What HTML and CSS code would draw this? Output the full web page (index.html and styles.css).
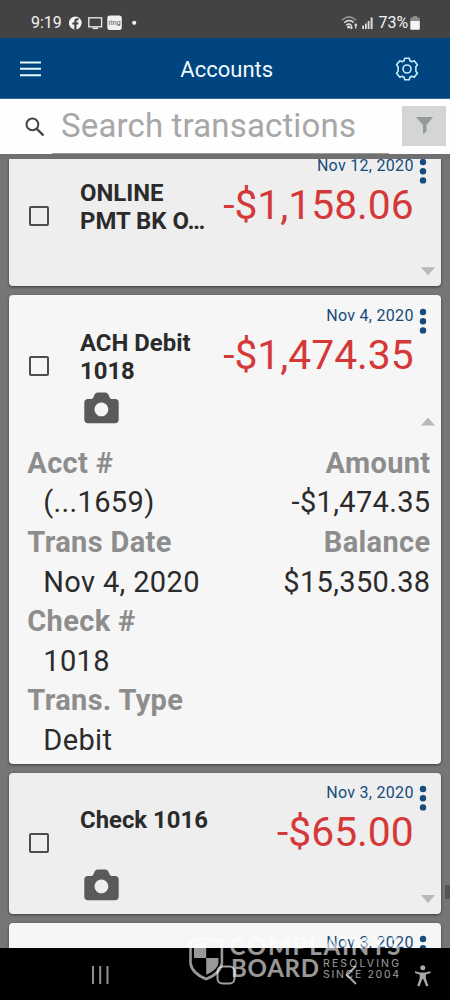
FILE: index.html
```html
<!DOCTYPE html>
<html lang="en">
<head>
<meta charset="utf-8">
<title>Accounts</title>
<link rel="stylesheet" href="styles.css">
</head>
<body>
<svg class="defs" aria-hidden="true">
  <symbol id="dots" viewBox="0 0 8 26"><circle cx="4" cy="4" r="3.2"/><circle cx="4" cy="13.2" r="3.2"/><circle cx="4" cy="22.4" r="3.2"/></symbol>
  <symbol id="camera" viewBox="0 0 35 32"><path fill-rule="evenodd" d="M4 7h3.500q1.200 0 1.800-1.400L10.800 2.200Q11.700.500 13.500.500h8q1.800 0 2.700 1.700l1.500 3.400Q26.300 7 27.500 7H31q3.700 0 3.700 3.600v17q0 3.600-3.700 3.600H4q-3.700 0-3.700-3.600v-17Q.300 7 4 7zM17.400 10.500a6.900 6.900 0 1 0 .01 0z"/></symbol>
</svg>
<div class="phone">
  <div class="status">
    <span class="clock">9:19</span>
    <svg class="notices" width="72" height="16" viewBox="0 0 72 16">
      <circle cx="6.300" cy="8" r="6.400" fill="#f2f2f2"/>
      <path d="M5.300 14.400V9.600H3.300V7.400h2V6.200q0-2.900 2.800-2.900h1.500v2H8.500q-1 0-1 1v1.100h2.100l-.4 2.200H7.500v4.800z" fill="#434343"/>
      <rect x="19.800" y="2.800" width="12.800" height="9" fill="none" stroke="#e4e4e4" stroke-width="1.400"/>
      <path d="M23.500 13.300h5.500" stroke="#e4e4e4" stroke-width="1.600"/>
      <rect x="38.300" y=".5" width="14.500" height="14.500" rx="2.800" fill="#f0f0f0"/>
      <text x="39.400" y="10" textLength="12.300" lengthAdjust="spacingAndGlyphs" class="ring">ring</text>
      <circle cx="65.200" cy="7.800" r="2.100" fill="#f4f4f4"/>
    </svg>
    <svg class="signal" width="34" height="16" viewBox="0 0 34 16">
      <g fill="none" stroke="#e2e2e2" stroke-width="1.500">
        <path d="M1 5.200Q8 -1.500 15 5.200" stroke="#999"/><path d="M3.200 7.800q4.800-4.300 9.400-.4M5.200 10.200q2.600-2.300 5 0"/>
      </g>
      <circle cx="7.600" cy="12" r="1.500" fill="#e2e2e2"/>
      <path d="M9.700 10.300h1.400v2h1.100l-1.800 2.200-1.800-2.200h1.100zM14.100 13.500h1.300v-3h1.200L14.800 8 13 10.500h1.100z" fill="#e2e2e2"/>
      <path d="M21.200 10.500h1.800V14h-1.800zM24 8.500h1.800V14H24zM26.700 6h1.800v8h-1.800zM29.600 2.500h2V14h-2z" fill="#ddd"/>
    </svg>
    <span class="percent">73%</span>
    <svg class="battery" width="10" height="15" viewBox="0 0 10 15"><path d="M3 0h4v1.500h2q.8 0 .8.800V5H.300V2.300q0-.8.800-.8H3z" fill="#8b8b8b"/><path d="M.300 5h9.500v7.700q0 1-.9 1H1.200q-.9 0-.9-1z" fill="#f5f5f5"/></svg>
  </div>

  <header class="bar">
    <svg class="menu" width="21" height="16" viewBox="0 0 21 16"><path d="M0 1.400h21M0 7.800h21M0 14.200h21" stroke="#e6fbff" stroke-width="2"/></svg>
    <h1>Accounts</h1>
    <svg class="gear" width="24" height="24" viewBox="0 0 24 24" fill="none" stroke="#c5edff" stroke-width="1.600" stroke-linejoin="round">
      <path d="M9.700 1.300h4.600l.6 2.500 1.900.9 2.400-1 3.200 4.100-1.500 2v4.400l1.500 2-3.200 4.100-2.400-1-1.900.9-.6 2.500H9.700l-.6-2.500-1.900-.9-2.400 1-3.200-4.100 1.500-2V9.800l-1.500-2 3.200-4.100 2.400 1 1.900-.9z"/>
      <circle cx="12" cy="12" r="4"/>
    </svg>
  </header>

  <div class="search">
    <svg class="lens" width="20" height="20" viewBox="0 0 20 20" fill="none" stroke="#444"><circle cx="7.400" cy="7.400" r="5.900" stroke-width="2"/><path d="M11.800 11.800l6.700 6.700" stroke-width="2.400"/></svg>
    <div class="field">Search transactions</div>
    <div class="filter"><svg width="17" height="17" viewBox="0 0 17 17"><path d="M0 0h17l-6.500 8v6.500L7 17V8z" fill="#969999"/></svg></div>
  </div>

  <main class="list">
    <div class="cards">
      <article class="card">
        <div class="head">
          <span class="check"></span>
          <div class="name"><h2>ONLINE<br>PMT BK O…</h2></div>
          <div class="sum"><div class="date">Nov 12, 2020</div><div class="amount">-$1,158.06</div></div>
          <div class="side"><svg class="more"><use href="#dots"/></svg><span class="caret"></span></div>
        </div>
      </article>

      <article class="card light">
        <div class="head">
          <span class="check"></span>
          <div class="name"><h2>ACH Debit<br>1018</h2><svg class="camera"><use href="#camera"/></svg></div>
          <div class="sum"><div class="date">Nov 4, 2020</div><div class="amount">-$1,474.35</div></div>
          <div class="side"><svg class="more"><use href="#dots"/></svg><span class="caret up"></span></div>
        </div>
        <div class="details">
          <dl>
            <dt>Acct #</dt><dd>(...1659)</dd>
            <dt>Trans Date</dt><dd>Nov 4, 2020</dd>
            <dt>Check #</dt><dd>1018</dd>
            <dt>Trans. Type</dt><dd>Debit</dd>
          </dl>
          <dl class="right">
            <dt>Amount</dt><dd>-$1,474.35</dd>
            <dt>Balance</dt><dd>$15,350.38</dd>
          </dl>
        </div>
      </article>

      <article class="card">
        <div class="head">
          <span class="check"></span>
          <div class="name"><h2>Check 1016</h2><svg class="camera"><use href="#camera"/></svg></div>
          <div class="sum"><div class="date">Nov 3, 2020</div><div class="amount">-$65.00</div></div>
          <div class="side"><svg class="more"><use href="#dots"/></svg><span class="caret"></span></div>
        </div>
      </article>

      <article class="card light">
        <div class="head">
          <span></span>
          <div class="name"></div>
          <div class="sum"><div class="date">Nov 3, 2020</div></div>
          <div class="side"><svg class="more"><use href="#dots"/></svg></div>
        </div>
      </article>
    </div>
    <span class="thumb"></span>
  </main>

  <nav class="nav">
    <svg width="450" height="52" viewBox="0 0 450 52" fill="none" stroke="#a0a0a0" stroke-width="2">
      <path d="M93 18v18M100.200 18v18M107.500 18v18" stroke="#8f8f8f"/>
      <rect x="217.500" y="18.500" width="17" height="17" rx="5"/>
      <path d="M356 18l-9 9 9 9" stroke-width="2.200"/>
      <circle cx="422.800" cy="19.700" r="2.500" fill="#a8a8a8" stroke="none"/>
      <path d="M415 23.200l5.200 1.200h5.200l5.200-1.200v1.900l-4.700 1.500v3.900l2.500 7.300-2.200.6-3-7.400h-.8l-3 7.400-2.200-.6 2.500-7.300v-3.900l-4.700-1.500z" fill="#a8a8a8" stroke="none"/>
    </svg>
  </nav>

  <svg class="watermark" width="220" height="52" viewBox="185 933 220 52">
    <path d="M206.200 937.500q-8 3-15.700 3.500v22q1 10 15.700 16 14.700-6 15.700-16v-22q-8-.5-15.700-3.500z" fill="none" stroke="#fff" stroke-width="2.600"/>
    <path d="M194 944q7-.5 12.200-2.500V958H194zM206.200 958h12.300v5q-.8 7-12.300 11.700z" fill="#fff"/>
    <text x="229.500" y="954.700" class="big" textLength="171">COMPLAINTS</text>
    <text x="231" y="977" class="big" textLength="88">BOARD</text>
    <text x="323" y="966.500" class="small" textLength="76">RESOLVING</text>
    <text x="323" y="977.500" class="small" textLength="76">SINCE 2004</text>
  </svg>
</div>
</body>
</html>
```
FILE: styles.css
```css
* { box-sizing: border-box; }
body { margin: 0; font-family: Roboto, "Liberation Sans", sans-serif; color: #2b2b2b; }
h1, h2, dl, dd { margin: 0; }
svg { display: block; flex: none; }
.defs { position: absolute; width: 0; height: 0; }

.phone { position: relative; display: flex; flex-direction: column; width: 450px; height: 1000px; overflow: hidden; }

.status { display: flex; align-items: center; height: 38px; padding: 8px 30px 0 31px; background: #434343; color: #f2f2f2; font-size: 16px; line-height: 20px; }
.clock { width: 37.700px; }
.percent { width: 31.500px; }
.signal { margin-left: auto; margin-right: 3.500px; }
.battery { width: 10px; }
.ring { font-size: 8px; fill: #555; }

.bar { display: flex; align-items: center; justify-content: space-between; height: 61px; padding: 2px 31px 0 20px; background: #00457f; border-bottom: 1px solid #356894; }
.bar h1 { padding: 2px 0 0 17.500px; color: #effaff; font-size: 22px; font-weight: 400; line-height: 26px; }

.search { display: flex; align-items: flex-start; height: 55px; padding-left: 25px; background: #fefefe; }
.lens { margin: 17.500px 7px 0 0; }
.field { width: 337px; height: 55px; padding: 5.500px 0 0 9px; border-bottom: 1px solid #999; color: #a7a7a7; font-size: 33px; line-height: 42px; letter-spacing: .15px; white-space: nowrap; }
.filter { display: flex; justify-content: center; width: 44px; height: 40px; margin: 7px 0 0 13px; padding-top: 11px; background: #d4d6d6; }

.list { position: relative; flex: 1; min-height: 0; overflow: hidden; border-top: 5px solid #707070; background: #767676; }
.cards { display: flex; flex-direction: column; gap: 9px; margin: -14px 9px 0; }
.card { flex: none; border-radius: 4px; background: #eee; box-shadow: 0 1px 3px rgba(0, 0, 0, .5); }
.light { background: #f6f6f6; }
.head { display: grid; grid-template-columns: 71px 1fr auto 26px; height: 141.300px; }
.check { width: 20px; height: 20px; margin: 60.500px 0 0 20px; border: 2px solid #4c4c4c; border-radius: 2px; }
.name { display: flex; flex-direction: column; justify-content: space-between; width: 0; padding: 33.500px 0 12.500px; white-space: nowrap; }
.name h2 { font-size: 23.900px; font-weight: 700; line-height: 28.400px; }
.camera { width: 35px; height: 32px; margin-left: 4px; fill: #5a5a5a; }
.sum { padding: 10.500px 1.300px 0 0; text-align: right; }
.date { margin-bottom: 6px; color: #164b7c; font-size: 16px; line-height: 20px; letter-spacing: .3px; }
.amount { color: #d53838; font-size: 40.800px; line-height: 46px; }
.side { display: flex; flex-direction: column; justify-content: space-between; padding: 12.500px 0 11px; }
.more { width: 8px; height: 26px; margin-left: 4px; fill: #164b7c; }
.caret { width: 14px; height: 8px; margin-left: 6px; background: #b8b8b8; clip-path: polygon(0 0, 100% 0, 50% 100%); }
.up { clip-path: polygon(50% 0, 100% 100%, 0 100%); }

.details { display: flex; justify-content: space-between; height: 327px; padding: 7.200px 10.500px 0 18.300px; font-size: 29px; line-height: 39.600px; letter-spacing: .35px; }
.details dt { color: #8d8d8d; font-weight: 700; }
.details dd { padding-left: 16px; }
.right { text-align: right; }

.thumb { position: absolute; right: 0; top: 726px; width: 5px; height: 14px; background: #555; }
.nav { height: 52px; background: #000; }

.watermark { position: absolute; left: 185px; top: 933px; fill: #fff; opacity: .6; }
.big { font: 700 24px Lato, sans-serif; }
.small { font: 400 10.500px Inter, sans-serif; }
```
